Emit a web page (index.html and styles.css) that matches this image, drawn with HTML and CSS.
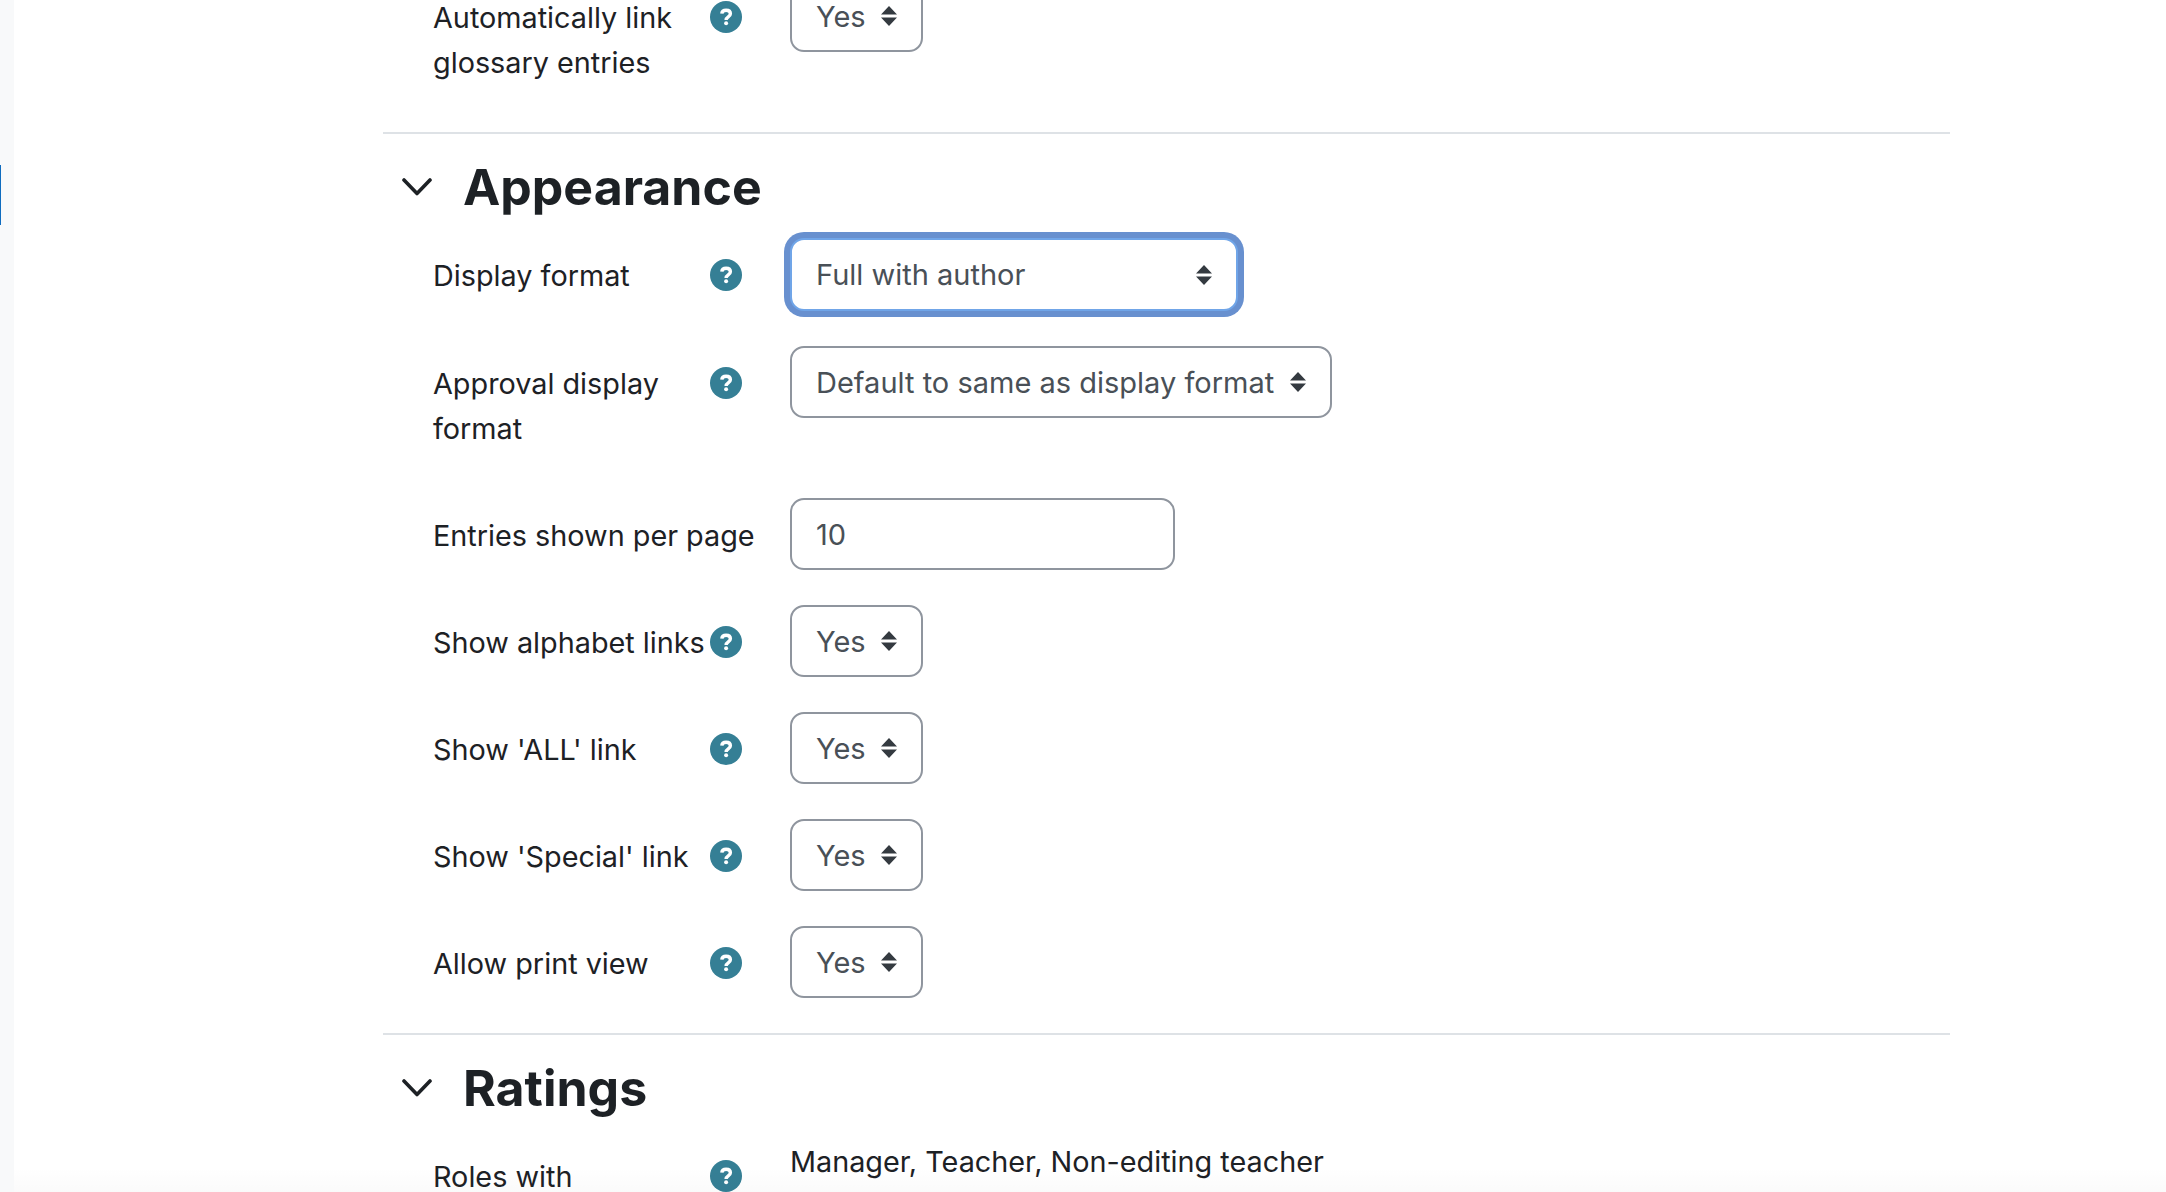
FILE: index.html
```html
<!DOCTYPE html>
<html lang="en">
<head>
<meta charset="utf-8">
<title>Glossary settings</title>
<link rel="stylesheet" href="styles.css">
</head>
<body>
<svg class="defs" width="0" height="0" aria-hidden="true">
  <symbol id="help" viewBox="0 0 32 32"><circle class="help-disc" cx="16" cy="16" r="16"/><path class="help-hook" d="M11.800 12.600C12 10.300 13.700 9.300 16.100 9.300 18.600 9.300 20.400 10.600 20.400 12.800 20.400 15.900 16.100 15.800 16.100 18.900"/><circle class="help-dot" cx="16.100" cy="22.300" r="2"/></symbol>
  <symbol id="caret" viewBox="0 0 16 20"><path d="M8 0 16 8.500H0ZM0 11.500H16L8 20Z"/></symbol>
  <symbol id="chevron" viewBox="0 0 30 18"><path d="M2 2 15 15.500 28 2" fill="none" stroke="currentColor" stroke-width="3.600" stroke-linecap="round" stroke-linejoin="round"/></symbol>
</svg>
<div class="rail"><span class="rail-mark"></span></div>
<main class="page">
  <section class="section section-cut">
    <div class="row">
      <div class="label">Automatically link glossary entries</div>
      <svg class="help"><use href="#help"/></svg>
      <div class="select w-yes"><span>Yes</span><svg class="caret"><use href="#caret"/></svg></div>
    </div>
  </section>
  <section class="section">
    <h3 class="heading"><svg class="chevron"><use href="#chevron"/></svg>Appearance</h3>
    <div class="row">
      <div class="label">Display format</div>
      <svg class="help"><use href="#help"/></svg>
      <div class="select w-full focused"><span>Full with author</span><svg class="caret"><use href="#caret"/></svg></div>
    </div>
    <div class="row">
      <div class="label">Approval display format</div>
      <svg class="help"><use href="#help"/></svg>
      <div class="select w-default"><span>Default to same as display format</span><svg class="caret"><use href="#caret"/></svg></div>
    </div>
    <div class="row">
      <div class="label label-wide">Entries shown per page</div>
      <input class="text-input" type="text" value="10">
    </div>
    <div class="row">
      <div class="label">Show alphabet links</div>
      <svg class="help"><use href="#help"/></svg>
      <div class="select w-yes"><span>Yes</span><svg class="caret"><use href="#caret"/></svg></div>
    </div>
    <div class="row">
      <div class="label">Show 'ALL' link</div>
      <svg class="help"><use href="#help"/></svg>
      <div class="select w-yes"><span>Yes</span><svg class="caret"><use href="#caret"/></svg></div>
    </div>
    <div class="row">
      <div class="label">Show 'Special' link</div>
      <svg class="help"><use href="#help"/></svg>
      <div class="select w-yes"><span>Yes</span><svg class="caret"><use href="#caret"/></svg></div>
    </div>
    <div class="row">
      <div class="label">Allow print view</div>
      <svg class="help"><use href="#help"/></svg>
      <div class="select w-yes"><span>Yes</span><svg class="caret"><use href="#caret"/></svg></div>
    </div>
  </section>
  <section class="section">
    <h3 class="heading"><svg class="chevron"><use href="#chevron"/></svg>Ratings</h3>
    <div class="row">
      <div class="label label-cut">Roles with</div>
      <svg class="help"><use href="#help"/></svg>
      <div class="static">Manager, Teacher, Non-editing teacher</div>
    </div>
  </section>
</main>
<div class="bottom-fade"></div>
</body>
</html>
```
FILE: styles.css
```css
html, body {
  margin: 0;
  height: 1192px;
  overflow: hidden;
  background: #fff;
}
body {
  display: flex;
  font-family: Inter, "Liberation Sans", sans-serif;
  font-size: 28.800px;
  line-height: 45px;
  color: #1d2125;
}
.defs { position: absolute; }
.rail {
  flex: 0 0 14px;
  background: #f8f9fa;
  padding-top: 165px;
}
.rail-mark {
  display: block;
  width: 1px;
  height: 60px;
  background: #0f6cbf;
}
.page {
  flex: 0 0 1567px;
  margin-left: 369px;
  margin-top: -20px;
}
.section {
  border-bottom: 2px solid #dee2e6;
}
.section:last-child { border-bottom: 0; }
.heading {
  display: flex;
  align-items: center;
  box-sizing: border-box;
  margin: 0;
  padding-top: 2px;
  height: 104px;
  font-size: 50px;
  font-weight: 700;
  color: #1d2125;
}
.chevron {
  width: 30px;
  height: 18px;
  margin: 0 31px 0 19px;
  color: #1d2125;
}
.row {
  display: flex;
  align-items: flex-start;
  padding-left: 50px;
  margin-bottom: 35px;
}
.label {
  flex: 0 0 277px;
  padding: 15px 0 12px;
}
.label-wide { flex-basis: 357px; }
.label-cut { height: 45px; }
.help {
  flex: 0 0 32px;
  width: 32px;
  height: 32px;
  margin: 21px 48px 0 0;
}
.help-disc { fill: #357f95; }
.help-hook { fill: none; stroke: #fff; stroke-width: 3.400; }
.help-dot { fill: #fff; }
.select, .text-input {
  box-sizing: border-box;
  height: 72px;
  border: 2px solid #8f959e;
  border-radius: 14px;
  background: #fff;
  color: #495057;
  font: inherit;
  font-size: 29px;
}
.select {
  display: flex;
  align-items: center;
  justify-content: space-between;
  padding: 0 24px;
}
.caret { width: 16px; height: 20px; fill: #343a40; flex: none; }
.w-yes { width: 133px; }
.w-full { width: 448px; height: 73px; padding-right: 24px; }
.w-default { width: 542px; }
.text-input { width: 385px; padding: 0 24px; outline: 0; }
.focused {
  border-color: #70a5e8;
  box-shadow: 0 0 0 6px #6890cf;
}
.bottom-fade {
  position: absolute;
  left: 14px;
  right: 0;
  top: 1168px;
  height: 24px;
  background: linear-gradient(rgba(0, 0, 0, 0), rgba(0, 0, 0, 0.02));
  pointer-events: none;
}
```
